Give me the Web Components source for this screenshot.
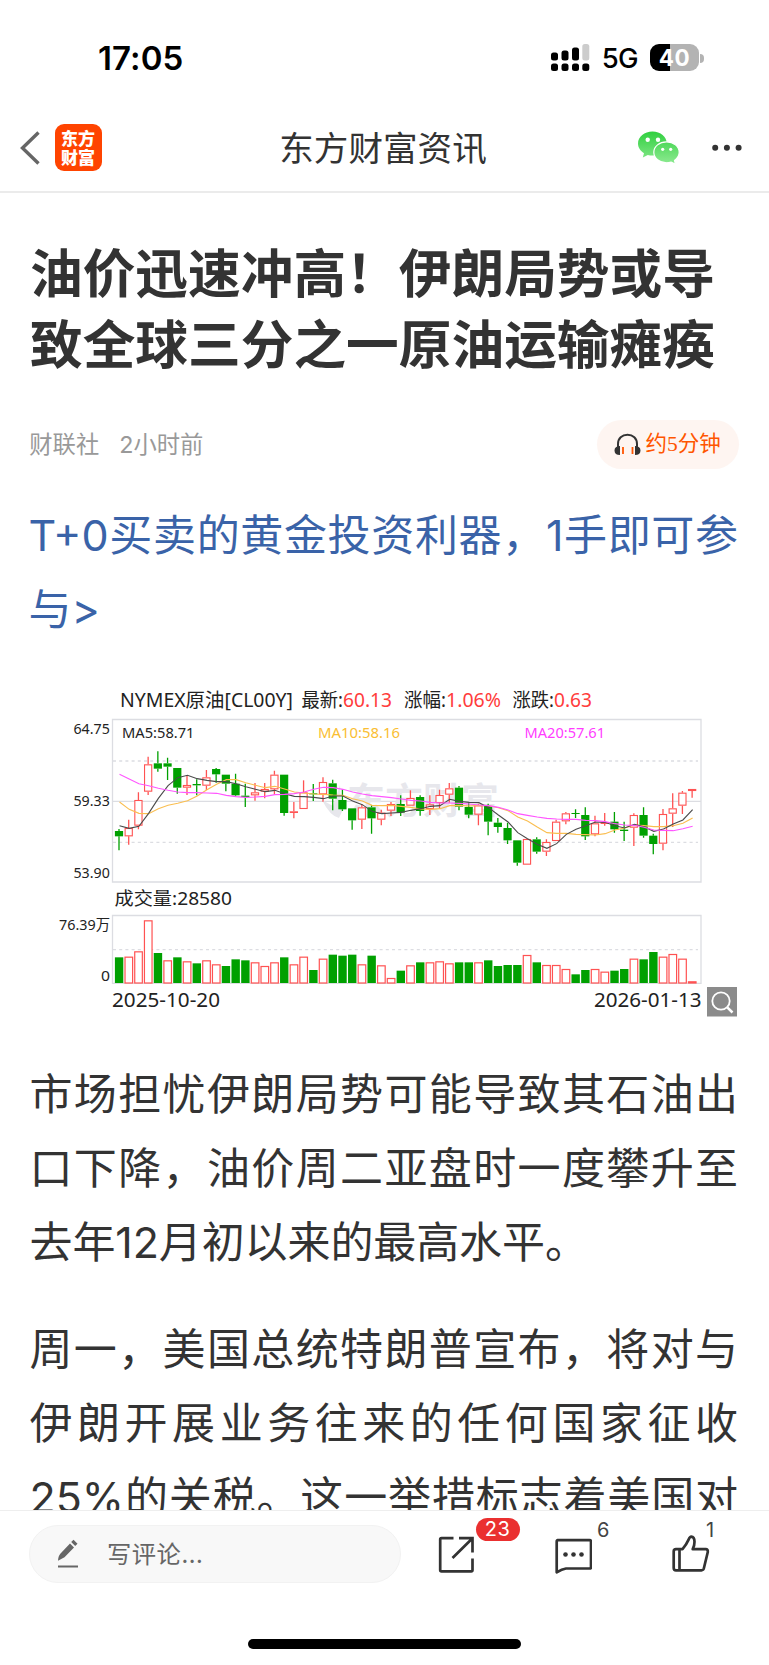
<!DOCTYPE html>
<html lang="zh-CN">
<head>
<meta charset="utf-8">
<title>东方财富资讯</title>
<style>
body{margin:0;background:#fff;font-family:"Inter","Noto Sans CJK SC",sans-serif;color:#333}
</style>
</head>
<body>
<news-app></news-app>
<script>
const define=(name,html,init)=>customElements.define(name,class extends HTMLElement{
  constructor(){super();const t=document.createElement('template');t.innerHTML=html;
    this.attachShadow({mode:'open'}).append(t.content.cloneNode(true));}
  connectedCallback(){if(init)init.call(this,this.shadowRoot);}
});

define('status-bar',`<style>
:host{display:flex;height:104px;box-sizing:border-box;padding:38px 65px 0 98px;align-items:flex-start;color:#000}
time{flex:1;font:600 33px/40px Inter,sans-serif;letter-spacing:.1px}
.r{display:flex;align-items:center;height:40px;gap:12px}
b{font:500 27.5px/40px Inter,sans-serif;letter-spacing:-.6px}
.bat{width:49px;height:27px;border-radius:9px;background:linear-gradient(90deg,#000 20px,#b3b3b3 20px);color:#fff;font:700 22.5px/27px Inter,sans-serif;text-align:center;letter-spacing:.5px;margin-top:-1px}
.nub{width:4px;height:9px;border-radius:0 5px 5px 0;background:#b3b3b3;margin-left:-11px}
</style><time>17:05</time><div class="r">
<svg width="39" height="28" viewBox="0 0 39 28"><g fill="#000"><rect x="0" y="8.500" width="7" height="8" rx="2.500"/><rect x="10.500" y="6.500" width="7" height="10" rx="2.500"/><rect x="21" y="3.500" width="7" height="13" rx="2.500"/><rect x="0" y="19.500" width="7" height="7.500" rx="2.500"/><rect x="10.500" y="19.500" width="7" height="7.500" rx="2.500"/><rect x="21" y="19.500" width="7" height="7.500" rx="2.500"/><rect x="31.300" y="19.500" width="7" height="7.500" rx="2.500"/></g><rect x="31.300" y="0" width="7" height="16.500" rx="2.500" fill="#ccc"/></svg>
<b>5G</b><div class="bat">40</div><i class="nub"></i></div>`);

define('nav-bar',`<style>
:host{display:grid;grid-template-columns:1fr auto 1fr;align-items:center;height:89px;box-sizing:border-box;border-bottom:2px solid #ebebeb}
.l{display:flex;align-items:center;padding-left:20px;gap:14px}
.logo{width:46.500px;height:46.500px;border-radius:9px;background:#ff4400;color:#fff;box-sizing:border-box;padding:4px 5px 0 6px;word-break:break-all;font:900 17px/19px "Noto Sans CJK SC",sans-serif}
h1{margin:-4px 3px 0 0;font:400 34.600px/50px "Noto Sans CJK SC",sans-serif;color:#333}
.r{display:flex;justify-content:flex-end;align-items:center;gap:32px;padding-right:27px}
svg{display:block}
</style><div class="l"><svg width="21" height="36" viewBox="20 130 21 36"><path d="M38.500 132.500 22.500 148l16 15.500" fill="none" stroke="#666" stroke-width="3.400"/></svg>
<div class="logo">东方财富</div></div><h1><slot></slot></h1>
<div class="r"><svg width="42" height="34" viewBox="638 131 42 34"><defs><linearGradient id="g" x1="0" y1="131" x2="0" y2="164" gradientUnits="userSpaceOnUse"><stop stop-color="#2fcf3e"/><stop offset="1" stop-color="#8eea92"/></linearGradient></defs>
<path fill="url(#g)" d="M652.500 131.500c8 0 14.300 5.400 14.300 12s-6.300 12-14.300 12c-1.700 0-3.200-.2-4.700-.6l-5 2.600 1.200-4.300c-3.600-2.200-6-5.700-6-9.700 0-6.600 6.500-12 14.500-12z"/>
<path fill="url(#g)" stroke="#fff" stroke-width="1.200" d="M666.500 141.800c7 0 12.700 4.700 12.700 10.500 0 3.300-1.800 6.200-4.700 8.200l1 3.800-4.300-2.200c-1.500.5-3 .7-4.700.7-7 0-12.700-4.700-12.700-10.500s5.700-10.500 12.700-10.500z"/>
<g fill="#fff"><circle cx="647.700" cy="139.700" r="2.200"/><circle cx="658" cy="139.700" r="2.200"/><circle cx="662.700" cy="149.300" r="1.600"/><circle cx="670.700" cy="149.300" r="1.600"/></g></svg>
<svg width="30" height="8" viewBox="711.500 144 30 8"><g fill="#333"><circle cx="714.700" cy="147.700" r="3"/><circle cx="726.400" cy="147.700" r="3"/><circle cx="738.100" cy="147.700" r="3"/></g></svg></div>`);

define('article-head',`<style>
:host{display:block;padding:42px 30px 0}
h2{margin:0;font:700 52.700px/70.600px "Noto Sans CJK SC",sans-serif;color:#333;white-space:nowrap}
h2 span{display:block}
.m{display:flex;align-items:center;margin-top:44px;height:49px;color:#999;font:400 23.300px/49px Inter,"Noto Sans CJK SC",sans-serif}
.s{margin-left:-.7px}
.t{margin-left:20px;flex:1}
.p{display:flex;align-items:center;gap:5px;width:142px;height:49px;border-radius:25px;background:#fef5f1;color:#ff5500;box-sizing:border-box;padding-left:17px;margin-right:.5px;font:400 21.500px/49px "Liberation Serif","Noto Sans CJK SC",sans-serif;white-space:nowrap}
</style><h2><span>油价迅速冲高！伊朗局势或导</span><span>致全球三分之一原油运输瘫痪</span></h2>
<div class="m"><span class="s">财联社</span><span class="t">2小时前</span><div class="p"><svg width="27" height="24" viewBox="613 433 27 24"><path d="M617 447v-3c0-5.500 4-9.300 9.500-9.300s9.500 3.800 9.500 9.300v3" fill="none" stroke="#333" stroke-width="2"/><path d="M619 446v9c-3.500 0-5.500-1.500-5.500-4.500s2-4.500 5.500-4.500zM634 446v9c3.500 0 5.500-1.500 5.500-4.500s-2-4.500-5.500-4.500z" fill="#333"/><path d="M622 447v7M631.500 447v7" stroke="#ff5500" stroke-width="1.800"/></svg><span>约5分钟</span></div></div>`);

define('text-line',`<style>
:host{display:block;height:74.200px;line-height:74.200px;white-space:nowrap;text-align:justify;text-align-last:justify;text-justify:inter-character;font-size:43px}
:host([end]){text-align-last:left;letter-spacing:-.1px}
</style><slot></slot>`);

define('market-chart',`<style>:host{display:block}svg{display:block;font-family:"Noto Sans","Noto Sans CJK SC",sans-serif}</style><svg width="769" height="350" viewBox="0 680 769 350"></svg>`,function(root){
  const svg=root.querySelector('svg');
  // body top, body bottom, wick top, wick bottom, in thirds of a pixel below the chart's top edge
  const candles='G450,466,444,508 R441,466,416,491 R357,434,334,445 R250,332,227,342 G247,263,211,272 G247,257,230,297 G261,320,261,338 R312,320,282,342 G309,313,295,343 R289,314,267,327 G264,280,261,305 G281,308,281,331 G308,343,278,346 G344,348,308,378 R334,343,306,359 R324,332,306,352 R281,325,269,340 G281,396,281,404 R391,395,363,412 R334,384,298,384 G337,340,309,360 R303,340,289,362 G307,353,296,388 G357,385,325,390 G382,418,382,446 R379,416,370,444 G379,412,372,458 R395,416,386,433 R369,389,363,405 G369,395,343,405 R351,374,328,374 G348,390,343,404 R370,384,343,402 R342,366,326,383 R322,341,306,365 G320,377,315,388 G378,401,364,412 R373,401,368,433 G375,422,368,463 G425,438,411,455 G441,478,425,489 G478,545,478,554 R474,551,474,551 G475,512,469,518 R483,512,475,525 R422,480,416,480 R397,421,393,430 G396,399,385,411 G402,466,379,477 R427,460,404,466 R424,427,396,434 G422,445,393,455 G446,450,422,480 R402,440,397,495 G402,464,379,470 G464,489,458,520 R399,488,384,508 R382,398,337,438 R335,374,330,399 R324,330,324,350'.split(' ');
  const ma5=[434,442,436,397,352,314,290,283,293,298,302,302,308,317,325,332,328,338,346,347,349,353,345,345,360,371,391,398,396,394,388,383,376,374,355,361,364,365,380,402,423,455,473,490,502,488,460,445,434,423,424,434,441,430,437,451,444,429,417,386];
  const ma10=[363,385,397,398,383,373,367,359,345,326,310,296,296,305,313,320,316,324,333,336,339,340,342,343,353,360,373,374,373,376,379,384,385,383,374,373,375,373,374,380,389,408,420,438,455,457,457,460,461,462,458,447,441,432,434,437,437,434,427,411];
  const ma20=[280,294,308,314,322,328,333,335,335,336,337,343,347,349,348,346,341,340,338,333,325,319,320,325,333,339,344,347,350,354,358,360,364,366,366,367,369,372,374,379,387,398,403,408,412,414,415,415,418,419,422,428,432,433,439,447,448,449,443,436];
  const vols=[229,227,211,118,216,238,229,241,247,238,250,255,235,238,244,255,244,229,250,227,267,233,221,224,221,250,224,253,291,269,253,244,244,241,247,244,244,244,238,255,252,252,222,244,252,252,264,280,267,264,272,269,264,233,235,213,227,219,233,301];
  const dirs='GRRRGRGRGRRGGGRRRGRRGRGGGRGRRGRGRRRGGRGGGGRGRRRGGRRGGRGGRRRR';
  const X=i=>119+i*9.714,Y=v=>680+v/3,V=v=>880+v/3;
  const green='#00a000',red='#ff5252';
  let s='<g fill="none" stroke="#dcdde2" stroke-width="1.300"><path d="M112.500 718.500H701V881H112.500zM112.500 914.500H701V982.300H112.500zM112.500 800.400H701"/><path stroke-dasharray="3 3.200" d="M113 760H698M113 841.400H698M113 948.700H698"/></g>';
  s+='<g fill="#e7e7ec"><text x="347" y="813" font-size="36" font-weight="700" font-family="Noto Sans CJK SC" textLength="152" lengthAdjust="spacingAndGlyphs">东方财富</text><path d="M322 799l11 6 7-21 1 18 6-2-8 17q-9-2-17-18z"/></g>';
  candles.forEach((c,i)=>{const up=c[0]==='R',[a,b,h,l]=c.slice(1).split(',').map(Number),x=X(i),col=up?red:green;
    s+=`<path d="M${x} ${Y(h)}V${Y(a)}M${x} ${Y(b)}V${Y(l)}" stroke="${col}" stroke-width="1.300"/>`;
    s+=up?`<rect x="${x-3.600}" y="${Y(a)+.5}" width="7.200" height="${Math.max(.6,(b-a)/3-1)}" fill="#fff" stroke="${col}" stroke-width="1.100"/>`:`<rect x="${x-4.100}" y="${Y(a)}" width="8.200" height="${(b-a)/3}" fill="${col}"/>`;});
  const line=(m,c)=>`<polyline fill="none" stroke="${c}" stroke-width="1.100" points="${m.map((v,i)=>X(i)+.5+','+Y(v)).join(' ')}"/>`;
  s+=line(ma10,'#fabe50')+line(ma5,'#4a4a4a')+line(ma20,'#ff55ff');
  vols.forEach((v,i)=>{const x=X(i),y=V(v);
    s+=dirs[i]==='R'?`<rect x="${x-3.700}" y="${y+.5}" width="7.600" height="${Math.max(.8,981.500-y)}" fill="${i===59?'#ee3a43':'#fff'}" stroke="${red}" stroke-width="1.200"/>`:`<rect x="${x-4.100}" y="${y}" width="8.400" height="${982-y}" fill="${green}"/>`;});
  const t=(x,y,x2,size,txt,fill='#222')=>`<text x="${x}" y="${y}" font-size="${size}" fill="${fill}" textLength="${x2-x}" lengthAdjust="spacingAndGlyphs">${txt}</text>`;
  const R='#ff3c3c';
  s+=t(120,706,293,19.300,'NYMEX原油[CL00Y]')+t(301.500,706,343,19.300,'最新:')+t(343,706,392,19.300,'60.13',R)+t(404,706,446,19.300,'涨幅:')+t(446,706,501,19.300,'1.06%',R)+t(512.500,706,554,19.300,'涨跌:')+t(554,706,592,19.300,'0.63',R);
  s+=t(73.500,732.700,109.800,14.300,'64.75')+t(73.500,804.800,109.800,14.300,'59.33')+t(73.500,877,109.800,14.300,'53.90');
  s+=t(122,737,194.500,14.300,'MA5:58.71')+t(318,737,400,14.300,'MA10:58.16','#fabe32')+t(524.500,737,605,14.300,'MA20:57.61','#ff3cff');
  s+=t(114.500,904,232,18.500,'成交量:28580')+t(59,929,110,14.300,'76.39万')+t(101,980,110,14.300,'0')+t(112,1006,220,19,'2025-10-20')+t(594,1006,701.500,19,'2026-01-13');
  s+='<rect x="707" y="986" width="30" height="29.500" fill="#8b8b8b"/><g fill="none" stroke="#fff" stroke-width="1.800"><circle cx="721" cy="1000" r="8.700"/><path d="M727.300 1006.300l5.200 5.200" stroke-width="2.500"/></g>';
  svg.innerHTML=s;
});

define('article-body',`<style>
:host{display:block}
section{padding:0 31px 0 29.500px;margin:0 0 32px}
.link{color:#3a63a8;margin:29px 0 34px;padding-left:28.500px}
.p1{margin-top:26.500px}
</style>
<section class="link"><text-line>T+0买卖的黄金投资利器，1手即可参</text-line><text-line end>与&gt;</text-line></section>
<market-chart></market-chart>
<section class="p1"><text-line>市场担忧伊朗局势可能导致其石油出</text-line><text-line>口下降，油价周二亚盘时一度攀升至</text-line><text-line end>去年12月初以来的最高水平。</text-line></section>
<section><text-line>周一，美国总统特朗普宣布，将对与</text-line><text-line>伊朗开展业务往来的任何国家征收</text-line><text-line>25%的关税。这一举措标志着美国对</text-line></section>`);

define('action-icon',`<style>
:host{display:block;position:relative;width:40px;height:40px}
svg{display:block;width:40px;height:40px;fill:none;stroke:#333;stroke-width:2.700}
span{position:absolute;left:var(--bx);top:var(--by);font:400 20px/23px Inter,sans-serif;color:#444;letter-spacing:.5px}
:host([alert]) span{background:#ea3030;color:#fff;width:44px;height:23.500px;border-radius:12px;text-align:center}
</style><slot></slot><span></span>`,function(root){
  const icons={share:'<path d="M18.500 4.200H6.500Q5.200 4.200 5.200 5.500V36Q5.200 37.300 6.500 37.300H36.200Q37.500 37.300 37.500 36V24.500M24 4.200H37.500V18.500M37 4.700 17.500 24"/>',
  comment:'<path stroke-linejoin="round" d="M5.500 5.200H37.500Q39 5.200 39 6.700V32Q39 33.500 37.500 33.500H14Q10 34 4.700 37.300V6.700Q4.700 5.200 6.200 5.200z"/><g fill="#333" stroke="none"><circle cx="13.500" cy="19.500" r="2.300"/><circle cx="21.500" cy="19.500" r="2.300"/><circle cx="29.500" cy="19.500" r="2.300"/></g>',
  like:'<path stroke-linejoin="round" d="M10.500 14.200H6Q3.700 14.200 3.700 16.500V33Q3.700 35.300 6 35.300H31.500Q33.300 35.300 33.800 33.500L37.800 17Q38 14.200 35.800 14.200H22.700C24.700 10.500 26 2.200 21.200 1.700 18.500 1.700 19.500 6 12.500 14.200H10M9.500 15V35"/>'};
  const svg=document.createElementNS('http://www.w3.org/2000/svg','svg');
  svg.setAttribute('viewBox','0 0 40 40');svg.innerHTML=icons[this.getAttribute('name')];
  root.querySelector('slot').before(svg);
  root.querySelector('span').textContent=this.getAttribute('count');
});

define('comment-bar',`<style>
:host{display:flex;flex-direction:column;align-items:center;height:155px;box-sizing:border-box;background:#fff;border-top:1px solid #eee;padding-top:14px}
.row{display:flex;align-items:flex-start;width:100%;box-sizing:border-box;padding-left:29px}
.in{display:flex;align-items:center;width:372px;height:58px;box-sizing:border-box;border:1px solid #f2f2f2;border-radius:29px;background:#f8f8f8;color:#666;font:400 24.300px/54px "Noto Sans CJK SC",sans-serif;padding-left:27px}
.in svg{margin-right:28px}
.in span{letter-spacing:.5px;margin-top:-2px}
.home{width:273px;height:10px;border-radius:5px;background:#000;margin-top:56px}
</style><div class="row"><div class="in"><svg width="22" height="30" viewBox="57 1539 22 30"><path fill="#666" d="M70 1543.500l4 4-9.500 9.800-6.500 3.500c.2-3 .8-5.300 2.300-7zM73.500 1539.700l4 4-2.300 2.300-4-4z"/><path d="M58 1566.500h20" stroke="#666" stroke-width="2"/></svg><span>写评论...</span></div>
<action-icon name="share" count="23" alert style="margin:8.500px 0 0 33.500px;--bx:41px;--by:-15.700px"></action-icon>
<action-icon name="comment" count="6" style="margin:10px 0 0 77px;--bx:45.500px;--by:-16.500px"></action-icon>
<action-icon name="like" count="1" style="margin:10px 0 0 78.500px;--bx:36px;--by:-16.500px"></action-icon>
</div><div class="home"></div>`);

define('news-app',`<style>
:host{display:flex;flex-direction:column;width:769px;height:1665px;overflow:hidden;background:#fff}
main{flex:1;min-height:0;overflow:hidden}
</style><status-bar></status-bar><nav-bar>东方财富资讯</nav-bar><main><article-head></article-head><article-body></article-body></main><comment-bar></comment-bar>`);
</script>
</body>
</html>
